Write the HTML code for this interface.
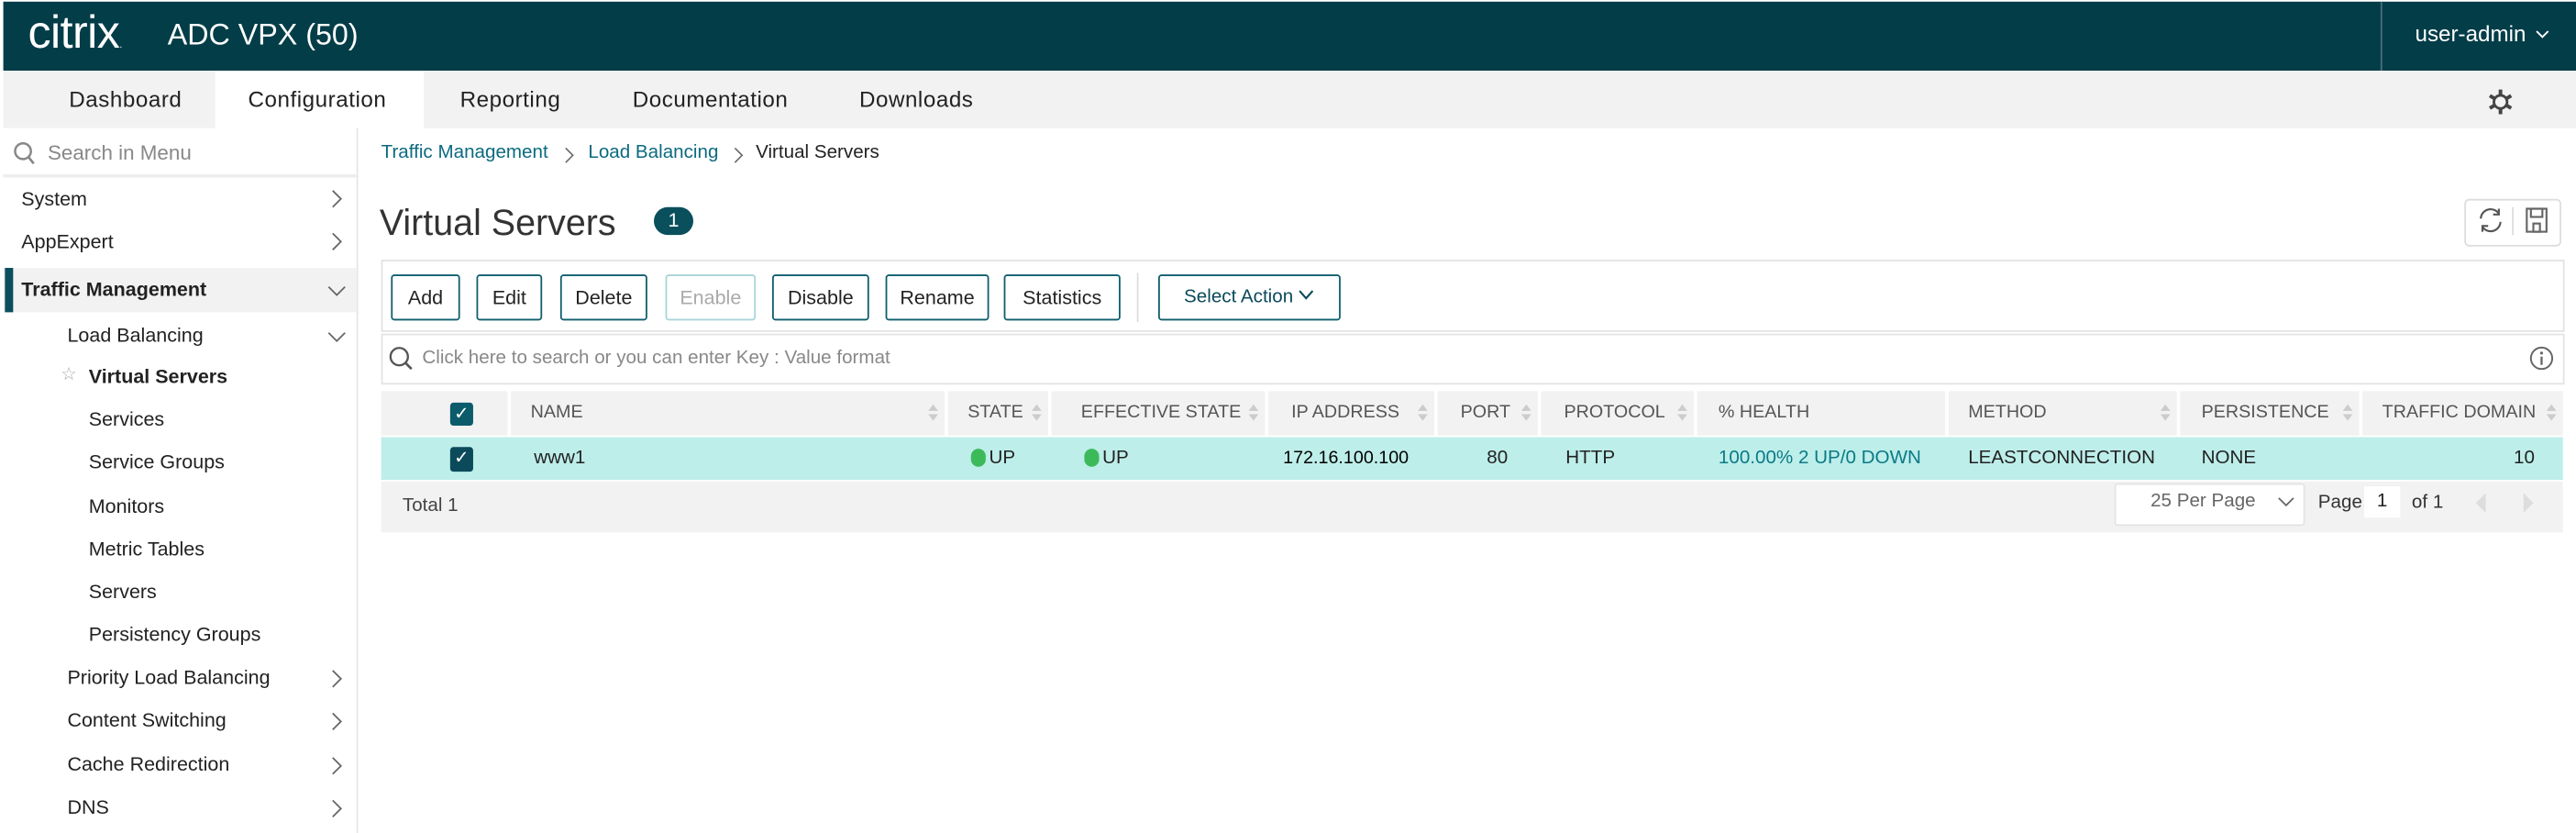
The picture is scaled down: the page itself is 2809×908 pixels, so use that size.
<!DOCTYPE html>
<html><head><meta charset="utf-8"><style>
html,body{margin:0;padding:0;width:2809px;height:907px;overflow:hidden;background:#fff}
#w{position:absolute;left:0;top:0;width:1568px;height:507px;transform:scale(1.7915);transform-origin:0 0;font-family:"Liberation Sans",sans-serif;color:#222}
.a{position:absolute;white-space:nowrap}
.hdr{left:2px;top:1px;width:1566px;height:42px;background:#033d48}
.tabs{left:2px;top:43px;width:1566px;height:35px;background:#f2f2f2}
.tab{top:43px;height:35px;line-height:35px;font-size:13.5px;color:#222;letter-spacing:.3px}
.side{left:2px;top:78px;width:215px;height:429px;background:#fff;border-right:1px solid #e6e6e6}
.si{font-size:12px;color:#222}
.th{top:238px;height:27px;line-height:27px;background:#f2f2f2;font-size:11px;color:#555;padding-left:12px;box-sizing:border-box}
.sort{position:absolute;right:4px;top:7px;width:6px;height:12px}
.btn{top:167px;height:26px;line-height:26px;border:1px solid #0e5e6e;border-radius:2px;font-size:12px;text-align:center;color:#222}
.td{top:266px;height:26px;line-height:26px;font-size:11.5px;color:#222}
</style></head><body><div id="w">
<svg width="0" height="0" style="position:absolute"><defs>
<symbol id="cr" viewBox="0 0 8 12"><path d="M1.5 1L6.5 6L1.5 11" fill="none" stroke="#666" stroke-width="1"/></symbol>
<symbol id="cd" viewBox="0 0 12 8"><path d="M1 1.5L6 6.5L11 1.5" fill="none" stroke="#666" stroke-width="1"/></symbol>
</defs></svg>
<div class="a hdr"></div>
<div class="a" style="left:17px;top:4px;font-size:28px;color:#fff;font-weight:300;letter-spacing:-.3px">citrix<span style="font-size:6px">.</span></div>
<div class="a" style="left:102px;top:11px;font-size:18px;color:#fff">ADC VPX (50)</div>
<div class="a" style="left:1449px;top:1px;width:1px;height:42px;background:#4a6f77"></div>
<div class="a" style="left:1470px;top:13px;font-size:13.5px;color:#fff">user-admin</div>
<svg class="a" style="left:1543px;top:18px" width="9" height="6"><use href="#cd" style="stroke:#fff"/><path d="M1 1L4.5 4.5L8 1" fill="none" stroke="#fff" stroke-width="1"/></svg>
<div class="a tabs"></div>
<div class="a" style="left:131px;top:43px;width:127px;height:35px;background:#fff"></div>
<div class="a tab" style="left:42px">Dashboard</div>
<div class="a tab" style="left:151px">Configuration</div>
<div class="a tab" style="left:280px">Reporting</div>
<div class="a tab" style="left:385px">Documentation</div>
<div class="a tab" style="left:523px">Downloads</div>
<svg class="a" style="left:1513px;top:53px" width="18" height="18" viewBox="0 0 18 18"><circle cx="9" cy="9" r="4" fill="none" stroke="#444" stroke-width="1.6"/><g stroke="#444" stroke-width="2.2"><line x1="9" y1="1.5" x2="9" y2="4.5"/><line x1="9" y1="13.5" x2="9" y2="16.5"/><line x1="2.5" y1="5.2" x2="5" y2="6.7"/><line x1="13" y1="11.3" x2="15.5" y2="12.8"/><line x1="2.5" y1="12.8" x2="5" y2="11.3"/><line x1="13" y1="6.7" x2="15.5" y2="5.2"/></g></svg>

<div class="a side"></div>
<div class="a" style="left:2px;top:106px;width:215px;height:2px;background:#eee"></div>
<svg class="a" style="left:8px;top:86px" width="14" height="15" viewBox="0 0 14 15"><circle cx="6" cy="6" r="4.8" fill="none" stroke="#888" stroke-width="1.4"/><line x1="9.3" y1="9.5" x2="12.5" y2="13.5" stroke="#888" stroke-width="1.5"/></svg>
<div class="a" style="left:29px;top:86px;font-size:12.5px;color:#888">Search in Menu</div>
<div class="a si" style="left:13px;top:114px">System</div><svg class="a" style="left:201px;top:115px" width="8" height="12"><use href="#cr"/></svg>
<div class="a si" style="left:13px;top:140px">AppExpert</div><svg class="a" style="left:201px;top:141px" width="8" height="12"><use href="#cr"/></svg>
<div class="a" style="left:2px;top:163px;width:215px;height:27px;background:#f2f2f2"></div>
<div class="a" style="left:3px;top:163px;width:5px;height:27px;background:#0a4f5c"></div>
<div class="a si" style="left:13px;top:169px;font-weight:bold">Traffic Management</div><svg class="a" style="left:199px;top:173px" width="12" height="8"><use href="#cd"/></svg>
<div class="a si" style="left:41px;top:197px">Load Balancing</div><svg class="a" style="left:199px;top:201px" width="12" height="8"><use href="#cd"/></svg>
<div class="a" style="left:37px;top:221px;font-size:11px;color:#aaa">&#x2606;</div>
<div class="a si" style="left:54px;top:222px;font-weight:bold">Virtual Servers</div>
<div class="a si" style="left:54px;top:248px">Services</div>
<div class="a si" style="left:54px;top:274px">Service Groups</div>
<div class="a si" style="left:54px;top:301px">Monitors</div>
<div class="a si" style="left:54px;top:327px">Metric Tables</div>
<div class="a si" style="left:54px;top:353px">Servers</div>
<div class="a si" style="left:54px;top:379px">Persistency Groups</div>
<div class="a si" style="left:41px;top:405px">Priority Load Balancing</div><svg class="a" style="left:201px;top:407px" width="8" height="12"><use href="#cr"/></svg>
<div class="a si" style="left:41px;top:431px">Content Switching</div><svg class="a" style="left:201px;top:433px" width="8" height="12"><use href="#cr"/></svg>
<div class="a si" style="left:41px;top:458px">Cache Redirection</div><svg class="a" style="left:201px;top:460px" width="8" height="12"><use href="#cr"/></svg>
<div class="a si" style="left:41px;top:484px">DNS</div><svg class="a" style="left:201px;top:486px" width="8" height="12"><use href="#cr"/></svg>

<div class="a" style="left:232px;top:87px;font-size:11.5px;color:#0b6a80">Traffic Management</div>
<svg class="a" style="left:343px;top:89px" width="7" height="11"><use href="#cr"/></svg>
<div class="a" style="left:358px;top:87px;font-size:11.5px;color:#0b6a80">Load Balancing</div>
<svg class="a" style="left:446px;top:89px" width="7" height="11"><use href="#cr"/></svg>
<div class="a" style="left:460px;top:87px;font-size:11.5px;color:#222">Virtual Servers</div>
<div class="a" style="left:231px;top:123px;font-size:22px;color:#333">Virtual Servers</div>
<div class="a" style="left:398px;top:126px;width:24px;height:17px;border-radius:9px;background:#0a4f5c;color:#fff;font-size:12px;text-align:center;line-height:17px">1</div>
<div class="a" style="left:1500px;top:121px;width:57px;height:27px;border:1px solid #ddd;border-radius:3px"></div>
<div class="a" style="left:1529px;top:126px;width:1px;height:17px;background:#ddd"></div>
<svg class="a" style="left:1507px;top:125px" width="18" height="18" viewBox="0 0 18 18" fill="none" stroke="#555" stroke-width="1.2"><path d="M3 8a6 6 0 0 1 11-3"/><path d="M14 2v3.5h-3.5"/><path d="M15 10a6 6 0 0 1-11 3"/><path d="M4 16v-3.5h3.5"/></svg>
<svg class="a" style="left:1536px;top:125px" width="16" height="18" viewBox="0 0 16 18" fill="none" stroke="#666" stroke-width="1.2"><rect x="2" y="2" width="12" height="14"/><rect x="4.5" y="2" width="7" height="5"/><rect x="6" y="11" width="4" height="5"/></svg>

<div class="a" style="left:232px;top:158px;width:1327px;height:42px;border:1px solid #e3e3e3"></div>
<div class="a btn" style="left:238px;width:40px">Add</div>
<div class="a btn" style="left:290px;width:38px">Edit</div>
<div class="a btn" style="left:341px;width:51px">Delete</div>
<div class="a btn" style="left:405px;width:53px;border-color:#a8d4d8;color:#aaa">Enable</div>
<div class="a btn" style="left:470px;width:57px">Disable</div>
<div class="a btn" style="left:539px;width:61px">Rename</div>
<div class="a btn" style="left:611px;width:69px">Statistics</div>
<div class="a" style="left:692px;top:166px;width:1px;height:30px;background:#ddd"></div>
<div class="a btn" style="left:705px;width:109px;font-size:11.5px;color:#0b4a5a">Select Action <svg width="10" height="7" style="vertical-align:1px"><path d="M1 1L5 5.5L9 1" fill="none" stroke="#0b4a5a" stroke-width="1.2"/></svg></div>

<div class="a" style="left:232px;top:203px;width:1327px;height:29px;border:1px solid #e3e3e3;background:#fff"></div>
<svg class="a" style="left:236px;top:210px" width="16" height="16" viewBox="0 0 16 16"><circle cx="7" cy="7" r="5.3" fill="none" stroke="#555" stroke-width="1.3"/><line x1="10.8" y1="10.8" x2="14.5" y2="14.5" stroke="#555" stroke-width="1.5"/></svg>
<div class="a" style="left:257px;top:212px;font-size:11.5px;color:#888">Click here to search or you can enter Key : Value format</div>
<svg class="a" style="left:1539px;top:210px" width="16" height="16" viewBox="0 0 16 16"><circle cx="8" cy="8" r="6.5" fill="none" stroke="#666" stroke-width="1.1"/><circle cx="8" cy="4.8" r=".9" fill="#666"/><line x1="8" y1="7" x2="8" y2="12" stroke="#666" stroke-width="1.3"/></svg>

<div class="a" style="left:232px;top:238px;width:1328px;height:27px;background:#fff"></div>
<div class="a th" style="left:232px;width:77px"></div>
<div class="a" style="left:274px;top:245px;width:14px;height:14px;border-radius:2px;background:#0b5b6b;color:#fff;font-size:11px;line-height:14px;text-align:center">&#x2713;</div>
<div class="a th" style="left:311px;width:264px">NAME<svg class="sort" viewBox="0 0 6 12"><path d="M0 5L3 1L6 5Z M0 7L3 11L6 7Z" fill="#ccc"/></svg></div>
<div class="a th" style="left:577px;width:61px">STATE<svg class="sort" viewBox="0 0 6 12"><path d="M0 5L3 1L6 5Z M0 7L3 11L6 7Z" fill="#ccc"/></svg></div>
<div class="a th" style="left:640px;width:130px;padding-left:18px">EFFECTIVE STATE<svg class="sort" viewBox="0 0 6 12"><path d="M0 5L3 1L6 5Z M0 7L3 11L6 7Z" fill="#ccc"/></svg></div>
<div class="a th" style="left:772px;width:101px;padding-left:14px">IP ADDRESS<svg class="sort" viewBox="0 0 6 12"><path d="M0 5L3 1L6 5Z M0 7L3 11L6 7Z" fill="#ccc"/></svg></div>
<div class="a th" style="left:875px;width:61px;padding-left:14px">PORT<svg class="sort" viewBox="0 0 6 12"><path d="M0 5L3 1L6 5Z M0 7L3 11L6 7Z" fill="#ccc"/></svg></div>
<div class="a th" style="left:938px;width:93px;padding-left:14px">PROTOCOL<svg class="sort" viewBox="0 0 6 12"><path d="M0 5L3 1L6 5Z M0 7L3 11L6 7Z" fill="#ccc"/></svg></div>
<div class="a th" style="left:1033px;width:151px;padding-left:13px">% HEALTH</div>
<div class="a th" style="left:1186px;width:139px;padding-left:12px">METHOD<svg class="sort" viewBox="0 0 6 12"><path d="M0 5L3 1L6 5Z M0 7L3 11L6 7Z" fill="#ccc"/></svg></div>
<div class="a th" style="left:1327px;width:109px;padding-left:13px">PERSISTENCE<svg class="sort" viewBox="0 0 6 12"><path d="M0 5L3 1L6 5Z M0 7L3 11L6 7Z" fill="#ccc"/></svg></div>
<div class="a th" style="left:1438px;width:122px;padding-left:12px">TRAFFIC DOMAIN<svg class="sort" viewBox="0 0 6 12"><path d="M0 5L3 1L6 5Z M0 7L3 11L6 7Z" fill="#ccc"/></svg></div>

<div class="a" style="left:232px;top:266px;width:1328px;height:26px;background:#bdeeea"></div>
<div class="a" style="left:274px;top:272px;width:14px;height:15px;border-radius:2px;background:#0b4a5a;color:#fff;font-size:11px;line-height:15px;text-align:center">&#x2713;</div>
<div class="a td" style="left:325px">www1</div>
<div class="a" style="left:591px;top:273px;width:9px;height:11px;border-radius:5px;background:#3cba5a"></div>
<div class="a td" style="left:602px">UP</div>
<div class="a" style="left:660px;top:273px;width:9px;height:11px;border-radius:5px;background:#3cba5a"></div>
<div class="a td" style="left:671px">UP</div>
<div class="a td" style="left:781px;font-size:11px;color:#000">172.16.100.100</div>
<div class="a td" style="left:905px">80</div>
<div class="a td" style="left:953px">HTTP</div>
<div class="a td" style="left:1046px;color:#0b7a86">100.00% 2 UP/0 DOWN</div>
<div class="a td" style="left:1198px">LEASTCONNECTION</div>
<div class="a td" style="left:1340px">NONE</div>
<div class="a td" style="left:1530px">10</div>

<div class="a" style="left:232px;top:293px;width:1328px;height:31px;background:#f2f2f2"></div>
<div class="a" style="left:245px;top:302px;font-size:11.5px;color:#444">Total 1</div>
<div class="a" style="left:1287px;top:294px;width:114px;height:24px;background:#fff;border:1px solid #e3e3e3;border-radius:2px"></div>
<div class="a" style="left:1309px;top:299px;font-size:11.5px;color:#666">25 Per Page</div>
<svg class="a" style="left:1386px;top:302px" width="11" height="7"><path d="M1 1L5.5 5.5L10 1" fill="none" stroke="#666" stroke-width="1"/></svg>
<div class="a" style="left:1411px;top:300px;font-size:11.5px;color:#333">Page</div>
<div class="a" style="left:1439px;top:296px;width:22px;height:19px;background:#fff;font-size:11.5px;text-align:center;line-height:19px">1</div>
<div class="a" style="left:1468px;top:300px;font-size:11.5px;color:#333">of 1</div>
<svg class="a" style="left:1507px;top:299px" width="38" height="14" viewBox="0 0 38 14"><path d="M6 1L0 7L6 13Z" fill="#ddd"/><path d="M29 1L35 7L29 13Z" fill="#ddd"/></svg>
</div></body></html>
